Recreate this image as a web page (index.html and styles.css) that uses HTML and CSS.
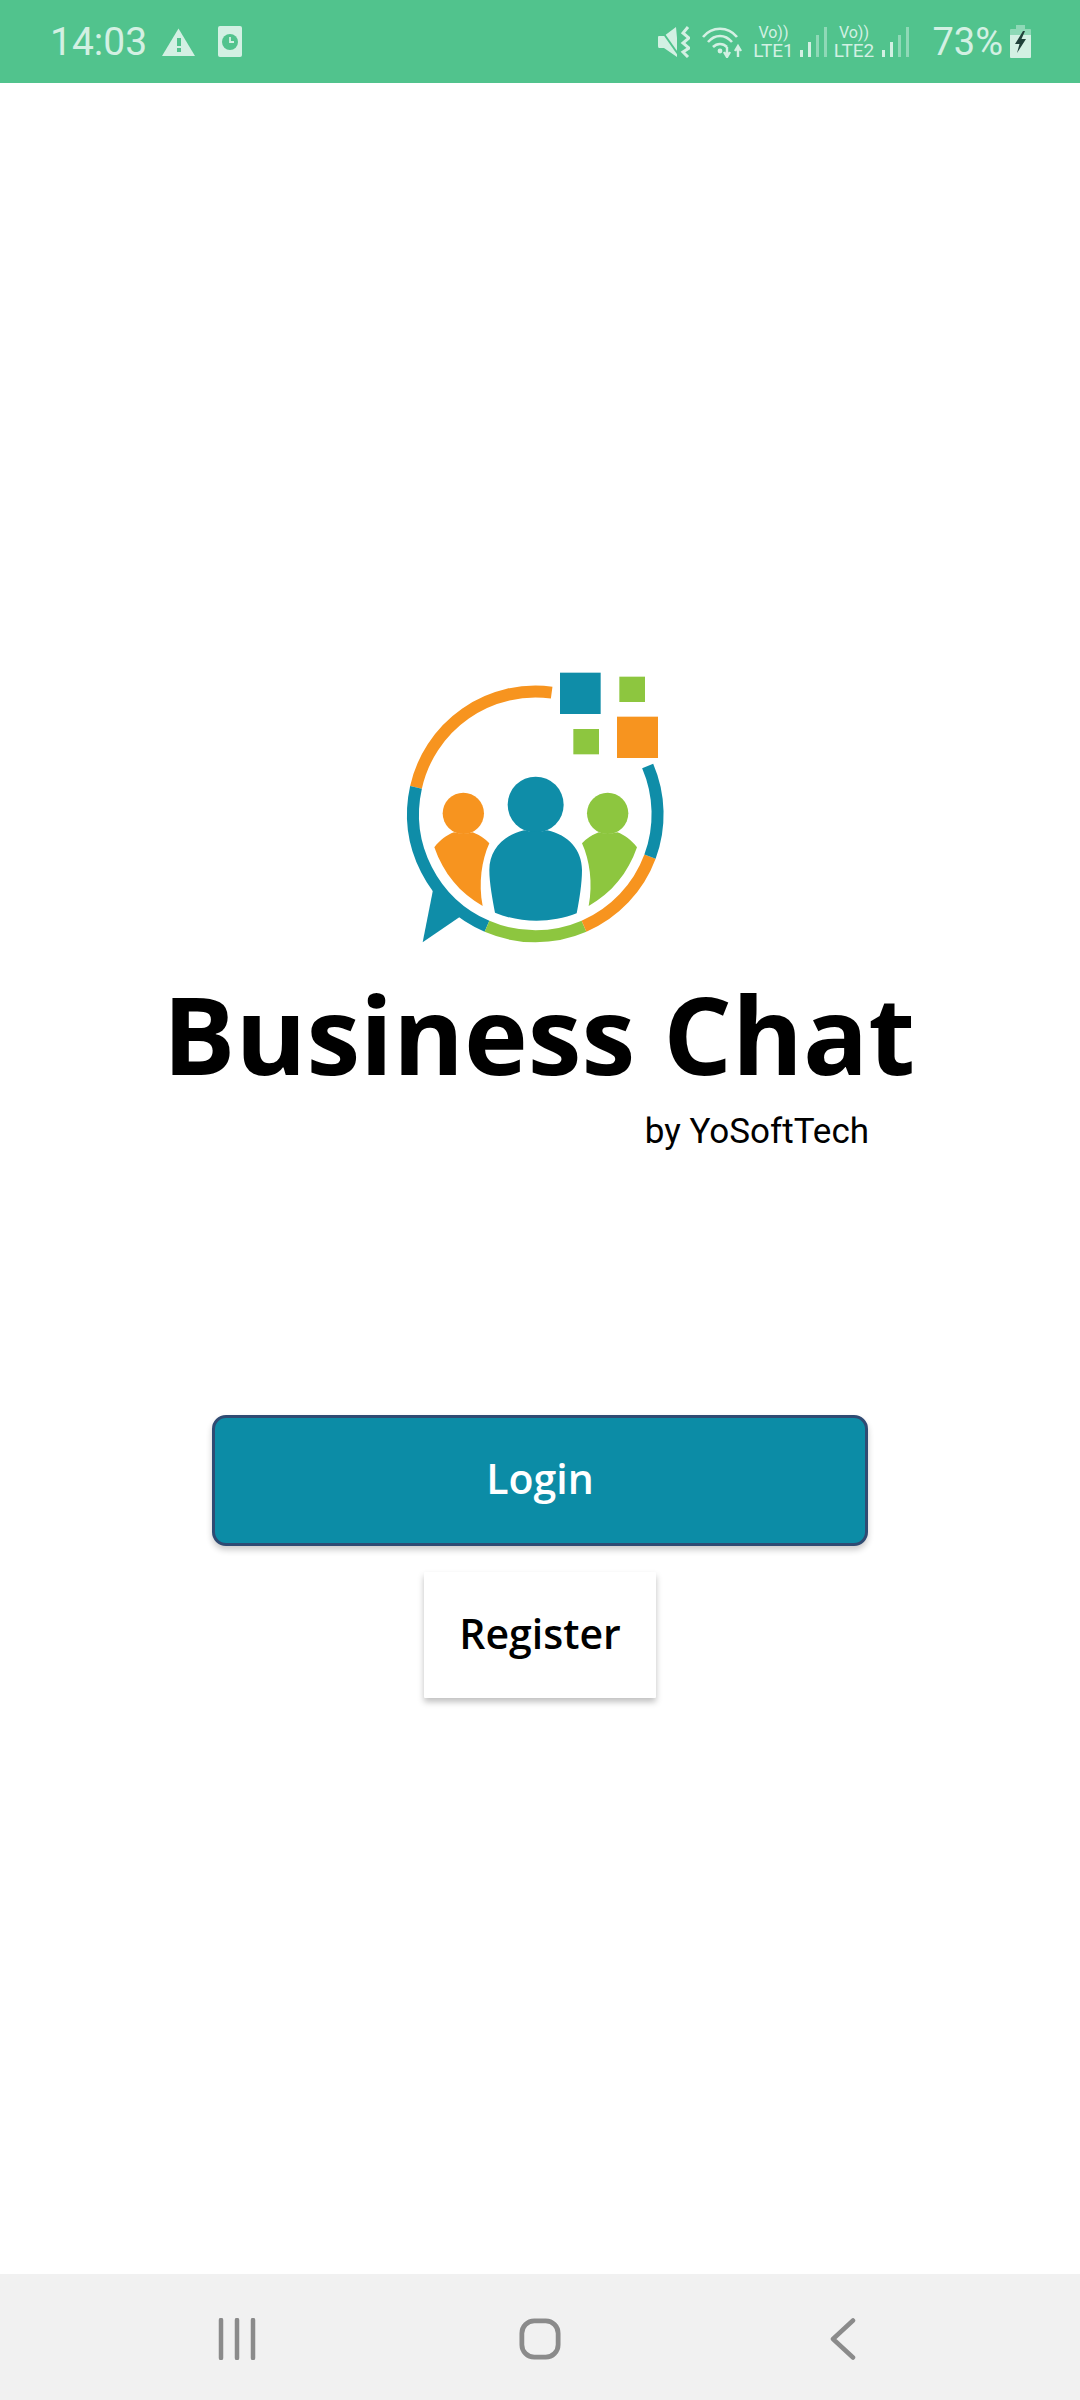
FILE: index.html
```html
<!DOCTYPE html>
<html lang="en">
<head>
  <meta charset="UTF-8">
  <meta name="viewport" content="width=device-width, initial-scale=1.0">
  <title>Business Chat</title>
  <link rel="stylesheet" href="styles.css">
</head>
<body>

<div class="status-bar">
  <div class="status-left">
    <span class="status-time">14:03</span>
    <svg class="icon-warning" viewBox="0 0 33 28">
      <path d="M16.5 0.5 L33 28 H0 Z" fill="#d3f0e3"/>
      <rect x="15" y="10" width="4" height="8" fill="#51c38d"/>
      <rect x="15" y="20" width="4" height="4" fill="#51c38d"/>
    </svg>
    <svg class="icon-card" viewBox="0 0 24 31">
      <rect width="24" height="31" rx="2" fill="#d3f0e3"/>
      <circle cx="12" cy="16" r="8" fill="#51c38d"/>
      <path d="M12 11 V16 H16" fill="none" stroke="#d3f0e3" stroke-width="1.8"/>
    </svg>
  </div>
  <div class="status-right">
    <svg class="icon-mute" viewBox="0 0 32 32">
      <path d="M1 10 H6 L18 1 L19 12 V31 L6 22 H1 Q0 22 0 20 V11 Q0 10 1 10 Z" fill="#d3f0e3"/>
      <path d="M1 1 L20 28" stroke="#51c38d" stroke-width="2"/>
      <path d="M30 1 L25 7 L31 12 L25 17 L31 22 L25 26 L30 31" fill="none" stroke="#d3f0e3" stroke-width="3"/>
    </svg>
    <svg class="icon-wifi" viewBox="0 0 41 32">
      <g fill="none" stroke="#d3f0e3" stroke-width="2.6">
        <path d="M1 11 C10 0 26 0 35 11"/>
        <path d="M6 16 C13 8 23 8 30 16"/>
        <path d="M11 21 C15 17 21 17 25 21"/>
      </g>
      <circle cx="18" cy="25" r="2.400" fill="#d3f0e3"/>
      <path d="M25 21 V29 M22 26 L25 31 L28 26 M36 31 V22 M33 25 L36 20 L39 25" fill="none" stroke="#d3f0e3" stroke-width="2.400"/>
    </svg>
    <div class="volte">
      <span class="volte-top">Vo))</span>
      <span class="volte-bottom">LTE1</span>
    </div>
    <svg class="icon-signal" viewBox="0 0 27 30">
      <rect x="0" y="23" width="3" height="7" fill="#d3f0e3"/>
      <rect x="8" y="15" width="3" height="15" fill="#d3f0e3"/>
      <rect x="16" y="8" width="3" height="22" fill="#8fd9b7"/>
      <rect x="24" y="0" width="3" height="30" fill="#8fd9b7"/>
    </svg>
    <div class="volte volte-second">
      <span class="volte-top">Vo))</span>
      <span class="volte-bottom">LTE2</span>
    </div>
    <svg class="icon-signal" viewBox="0 0 27 30">
      <rect x="0" y="23" width="3" height="7" fill="#d3f0e3"/>
      <rect x="8" y="15" width="3" height="15" fill="#d3f0e3"/>
      <rect x="16" y="8" width="3" height="22" fill="#8fd9b7"/>
      <rect x="24" y="0" width="3" height="30" fill="#8fd9b7"/>
    </svg>
    <span class="status-battery">73%</span>
    <svg class="icon-battery" viewBox="0 0 21 33">
      <path d="M6 0 H15 V4 H20 Q21 4 21 5 V10 H0 V5 Q0 4 1 4 H6 Z" fill="#8fd9b7"/>
      <path d="M0 10 H21 V32 Q21 33 20 33 H1 Q0 33 0 32 Z" fill="#d3f0e3"/>
      <path d="M13 6 L5 19 H9.5 L7 28 L16 14 H11.5 L15 6 Z" fill="#21413a"/>
    </svg>
  </div>
</div>

<div class="main">
  <svg class="logo" viewBox="0 0 900 900">
    <!-- anel do balao -->
    <g fill="none" stroke-width="36">
      <path d="M515 128 A367 367 0 0 0 108 412" stroke="#f7941f"/>
      <path d="M108 412 A367 367 0 0 0 321 829" stroke="#0f8da8"/>
      <path d="M321 829 A367 367 0 0 0 612 829" stroke="#8dc63f"/>
      <path d="M612 829 A367 367 0 0 0 810 620" stroke="#f7941f"/>
      <path d="M810 620 A367 367 0 0 0 803 348" stroke="#0f8da8"/>
    </g>
    <path d="M160 715 L128 877 L240 800 L200 745 Z" fill="#0f8da8"/>
    <!-- quadrados -->
    <rect x="540" y="68" width="122" height="124" fill="#0f8da8"/>
    <rect x="718" y="80" width="77" height="76" fill="#8dc63f"/>
    <rect x="580" y="237" width="77" height="76" fill="#8dc63f"/>
    <rect x="711" y="200" width="123" height="124" fill="#f7941f"/>
    <!-- pessoas -->
    <circle cx="250" cy="490" r="62" fill="#f7941f"/>
    <path d="M222 547 Q250 555 278 547 Q310 560 328 580 C305 630 295 700 308 768 C240 730 190 670 163 592 C180 570 200 555 222 547 Z" fill="#f7941f"/>
    <circle cx="467" cy="464" r="84" fill="#0f8da8"/>
    <path d="M432 541 C370 555 328 600 328 660 C328 700 338 750 345 788 C420 820 515 820 590 790 C598 750 606 700 606 660 C606 600 565 555 502 541 Q467 550 432 541 Z" fill="#0f8da8"/>
    <circle cx="683" cy="490" r="62" fill="#8dc63f"/>
    <path d="M712 547 Q684 555 656 547 Q624 560 606 580 C629 630 639 700 626 768 C694 730 744 670 771 592 C754 570 734 555 712 547 Z" fill="#8dc63f"/>
  </svg>

  <h1 class="app-title">Business Chat</h1>
  <p class="app-by">by YoSoftTech</p>

  <button class="btn-login">Login</button>
  <button class="btn-register">Register</button>
</div>

<div class="nav-bar">
  <svg class="nav-icon" viewBox="0 0 38 42">
    <path d="M3 2 V40 M19 2 V40 M35 2 V40" fill="none" stroke="#8b8b8b" stroke-width="4.500" stroke-linecap="round"/>
  </svg>
  <svg class="nav-icon" viewBox="0 0 44 44">
    <rect x="3" y="3" width="38" height="38" rx="13" fill="none" stroke="#8b8b8b" stroke-width="5"/>
  </svg>
  <svg class="nav-icon" viewBox="0 0 26 42">
    <path d="M23 2.500 L3 21 L23 39.500" fill="none" stroke="#8b8b8b" stroke-width="4.500" stroke-linecap="round" stroke-linejoin="round"/>
  </svg>
</div>

</body>
</html>
```

FILE: styles.css
```css
html, body {
  margin: 0;
  padding: 0;
}
body {
  width: 1080px;
  height: 2400px;
  display: flex;
  flex-direction: column;
  background-color: white;
  font-family: "Open Sans", sans-serif;
}

/* barra de status */
.status-bar {
  height: 83px;
  flex-shrink: 0;
  padding: 0 49px 0 50px;
  display: flex;
  justify-content: space-between;
  align-items: center;
  background-color: #51c38d;
  color: #d3f0e3;
  font-family: Roboto, sans-serif;
}
.status-left, .status-right {
  display: flex;
  align-items: center;
}
.status-time {
  font-size: 39px;
  margin-right: 15px;
}
.icon-warning {
  width: 33px;
  height: 28px;
  margin-right: 23px;
}
.icon-card {
  width: 24px;
  height: 31px;
}
.icon-mute {
  width: 32px;
  height: 32px;
  margin-right: 12px;
}
.icon-wifi {
  width: 41px;
  height: 32px;
  margin-right: 11px;
}
.volte {
  width: 38px;
  display: flex;
  flex-direction: column;
  align-items: center;
  margin-right: 8px;
}
.volte-second {
  width: 41px;
  margin-left: 6px;
}
.volte-top {
  font-size: 16px;
  line-height: 18px;
}
.volte-bottom {
  font-size: 19px;
  line-height: 18px;
}
.icon-signal {
  width: 27px;
  height: 30px;
}
.status-battery {
  font-size: 38px;
  margin-left: 23px;
  margin-right: 7px;
}
.icon-battery {
  width: 21px;
  height: 33px;
}

/* conteudo */
.main {
  flex: 1;
  display: flex;
  flex-direction: column;
  align-items: center;
}
.logo {
  width: 300px;
  height: 300px;
  margin: 567px 20px 0 0;
}
.app-title {
  margin: 24px 0 0 -2px;
  font-size: 108px;
  line-height: 120px;
  font-weight: 700;
  color: black;
  white-space: nowrap;
}
.app-by {
  margin: 17px 0 0 0;
  align-self: flex-end;
  padding-right: 211px;
  font-family: Roboto, sans-serif;
  font-size: 35px;
  line-height: 41px;
  color: black;
}
.btn-login, .btn-register {
  font-family: "Open Sans", sans-serif;
  font-size: 41px;
  font-weight: 600;
  padding: 0 0 5px 0;
}
.btn-login {
  width: 656px;
  height: 131px;
  margin-top: 263px;
  background-color: #0c8ca6;
  color: white;
  border: 3px solid #2f4b73;
  border-radius: 14px;
  box-shadow: 0 4px 6px rgba(0, 0, 0, 0.2);
}
.btn-register {
  width: 232px;
  height: 126px;
  margin-top: 26px;
  background-color: white;
  color: black;
  border: none;
  border-radius: 1px;
  box-shadow: 0 4px 6px rgba(0, 0, 0, 0.25);
}

/* barra de navegacao */
.nav-bar {
  height: 123px;
  flex-shrink: 0;
  padding: 3px 86px 0;
  display: grid;
  grid-template-columns: 1fr 1fr 1fr;
  justify-items: center;
  align-items: center;
  background-color: #f1f1f1;
}
.nav-icon {
  height: 42px;
}
```
